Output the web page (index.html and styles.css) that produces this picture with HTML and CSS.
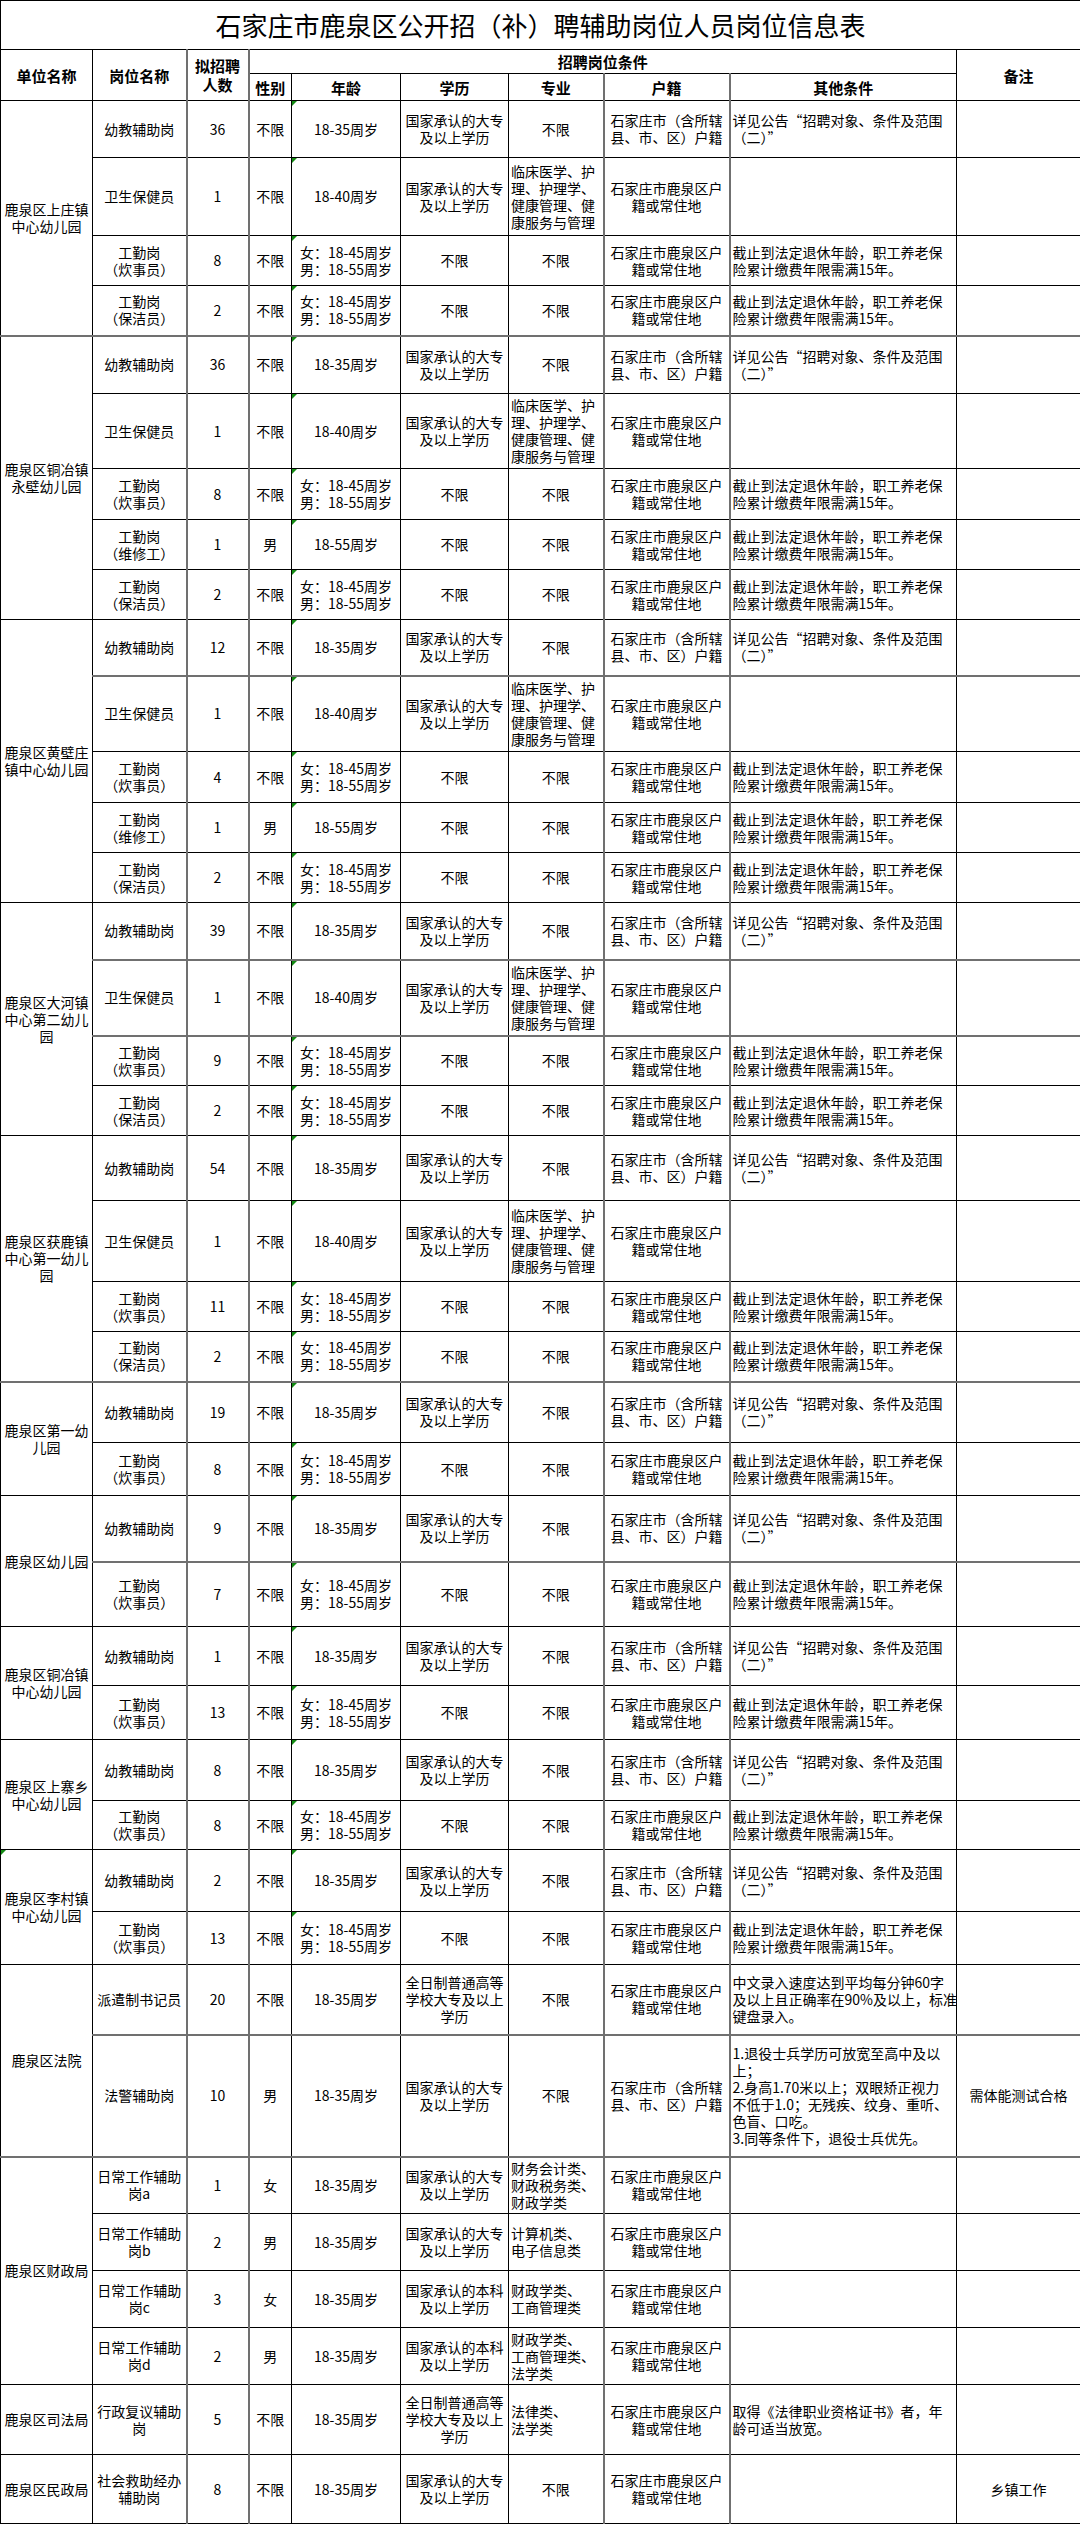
FILE: index.html
```html
<!DOCTYPE html>
<html lang="zh-CN">
<head>
<meta charset="utf-8">
<title>石家庄市鹿泉区公开招（补）聘辅助岗位人员岗位信息表</title>
<link rel="stylesheet" href="styles.css">
</head>
<body>
<table class="sheet">
<colgroup>
<col class="c1"><col class="c2"><col class="c3 gl"><col class="c4 gl"><col class="c5"><col class="c6"><col class="c7"><col class="c8 gl"><col class="c9 gl"><col class="c10">
</colgroup>
<tbody>
<tr class="title"><td colspan="10">石家庄市鹿泉区公开招（补）聘辅助岗位人员岗位信息表</td></tr>
<tr class="h24"><th rowspan="2">单位名称</th><th rowspan="2">岗位名称</th><th rowspan="2">拟招聘<br>人数</th><th colspan="6">招聘岗位条件</th><th rowspan="2">备注</th></tr>
<tr class="h27"><th>性别</th><th>年龄</th><th>学历</th><th>专业</th><th>户籍</th><th>其他条件</th></tr>

<!-- G1 -->
<tr class="h57"><td rowspan="4">鹿泉区上庄镇<br>中心幼儿园</td><td>幼教辅助岗</td><td>36</td><td>不限</td><td class="a">18-35周岁</td><td>国家承认的大专<br>及以上学历</td><td>不限</td><td>石家庄市（含所辖<br>县、市、区）户籍</td><td class="l">详见公告“招聘对象、条件及范围<br>（二）”</td><td></td></tr>
<tr class="h78"><td>卫生保健员</td><td>1</td><td>不限</td><td class="a">18-40周岁</td><td>国家承认的大专<br>及以上学历</td><td class="l">临床医学、护<br>理、护理学、<br>健康管理、健<br>康服务与管理</td><td>石家庄市鹿泉区户<br>籍或常住地</td><td></td><td></td></tr>
<tr class="h50"><td>工勤岗<br>（炊事员）</td><td>8</td><td>不限</td><td class="a">女：18-45周岁<br>男：18-55周岁</td><td>不限</td><td>不限</td><td>石家庄市鹿泉区户<br>籍或常住地</td><td class="l">截止到法定退休年龄，职工养老保<br>险累计缴费年限需满15年。</td><td></td></tr>
<tr class="h50"><td>工勤岗<br>（保洁员）</td><td>2</td><td>不限</td><td class="a">女：18-45周岁<br>男：18-55周岁</td><td>不限</td><td>不限</td><td>石家庄市鹿泉区户<br>籍或常住地</td><td class="l">截止到法定退休年龄，职工养老保<br>险累计缴费年限需满15年。</td><td></td></tr>

<!-- G2 -->
<tr class="h58 g"><td rowspan="5">鹿泉区铜冶镇<br>永壁幼儿园</td><td>幼教辅助岗</td><td>36</td><td>不限</td><td class="a">18-35周岁</td><td>国家承认的大专<br>及以上学历</td><td>不限</td><td>石家庄市（含所辖<br>县、市、区）户籍</td><td class="l">详见公告“招聘对象、条件及范围<br>（二）”</td><td></td></tr>
<tr class="h75"><td>卫生保健员</td><td>1</td><td>不限</td><td class="a">18-40周岁</td><td>国家承认的大专<br>及以上学历</td><td class="l">临床医学、护<br>理、护理学、<br>健康管理、健<br>康服务与管理</td><td>石家庄市鹿泉区户<br>籍或常住地</td><td></td><td></td></tr>
<tr class="h51"><td>工勤岗<br>（炊事员）</td><td>8</td><td>不限</td><td class="a">女：18-45周岁<br>男：18-55周岁</td><td>不限</td><td>不限</td><td>石家庄市鹿泉区户<br>籍或常住地</td><td class="l">截止到法定退休年龄，职工养老保<br>险累计缴费年限需满15年。</td><td></td></tr>
<tr class="h50"><td>工勤岗<br>（维修工）</td><td>1</td><td>男</td><td class="a">18-55周岁</td><td>不限</td><td>不限</td><td>石家庄市鹿泉区户<br>籍或常住地</td><td class="l">截止到法定退休年龄，职工养老保<br>险累计缴费年限需满15年。</td><td></td></tr>
<tr class="h50"><td>工勤岗<br>（保洁员）</td><td>2</td><td>不限</td><td class="a">女：18-45周岁<br>男：18-55周岁</td><td>不限</td><td>不限</td><td>石家庄市鹿泉区户<br>籍或常住地</td><td class="l">截止到法定退休年龄，职工养老保<br>险累计缴费年限需满15年。</td><td></td></tr>

<!-- G3 -->
<tr class="h56"><td rowspan="5">鹿泉区黄壁庄<br>镇中心幼儿园</td><td>幼教辅助岗</td><td>12</td><td>不限</td><td class="a">18-35周岁</td><td>国家承认的大专<br>及以上学历</td><td>不限</td><td>石家庄市（含所辖<br>县、市、区）户籍</td><td class="l">详见公告“招聘对象、条件及范围<br>（二）”</td><td></td></tr>
<tr class="h76 g"><td>卫生保健员</td><td>1</td><td>不限</td><td class="a">18-40周岁</td><td>国家承认的大专<br>及以上学历</td><td class="l">临床医学、护<br>理、护理学、<br>健康管理、健<br>康服务与管理</td><td>石家庄市鹿泉区户<br>籍或常住地</td><td></td><td></td></tr>
<tr class="h51"><td>工勤岗<br>（炊事员）</td><td>4</td><td>不限</td><td class="a">女：18-45周岁<br>男：18-55周岁</td><td>不限</td><td>不限</td><td>石家庄市鹿泉区户<br>籍或常住地</td><td class="l">截止到法定退休年龄，职工养老保<br>险累计缴费年限需满15年。</td><td></td></tr>
<tr class="h50"><td>工勤岗<br>（维修工）</td><td>1</td><td>男</td><td class="a">18-55周岁</td><td>不限</td><td>不限</td><td>石家庄市鹿泉区户<br>籍或常住地</td><td class="l">截止到法定退休年龄，职工养老保<br>险累计缴费年限需满15年。</td><td></td></tr>
<tr class="h50"><td>工勤岗<br>（保洁员）</td><td>2</td><td>不限</td><td class="a">女：18-45周岁<br>男：18-55周岁</td><td>不限</td><td>不限</td><td>石家庄市鹿泉区户<br>籍或常住地</td><td class="l">截止到法定退休年龄，职工养老保<br>险累计缴费年限需满15年。</td><td></td></tr>

<!-- G4 -->
<tr class="h57"><td rowspan="4">鹿泉区大河镇<br>中心第二幼儿<br>园</td><td>幼教辅助岗</td><td>39</td><td>不限</td><td class="a">18-35周岁</td><td>国家承认的大专<br>及以上学历</td><td>不限</td><td>石家庄市（含所辖<br>县、市、区）户籍</td><td class="l">详见公告“招聘对象、条件及范围<br>（二）”</td><td></td></tr>
<tr class="h76 g"><td>卫生保健员</td><td>1</td><td>不限</td><td class="a">18-40周岁</td><td>国家承认的大专<br>及以上学历</td><td class="l">临床医学、护<br>理、护理学、<br>健康管理、健<br>康服务与管理</td><td>石家庄市鹿泉区户<br>籍或常住地</td><td></td><td></td></tr>
<tr class="h50 g"><td>工勤岗<br>（炊事员）</td><td>9</td><td>不限</td><td class="a">女：18-45周岁<br>男：18-55周岁</td><td>不限</td><td>不限</td><td>石家庄市鹿泉区户<br>籍或常住地</td><td class="l">截止到法定退休年龄，职工养老保<br>险累计缴费年限需满15年。</td><td></td></tr>
<tr class="h50"><td>工勤岗<br>（保洁员）</td><td>2</td><td>不限</td><td class="a">女：18-45周岁<br>男：18-55周岁</td><td>不限</td><td>不限</td><td>石家庄市鹿泉区户<br>籍或常住地</td><td class="l">截止到法定退休年龄，职工养老保<br>险累计缴费年限需满15年。</td><td></td></tr>

<!-- G5 -->
<tr class="h65"><td rowspan="4">鹿泉区获鹿镇<br>中心第一幼儿<br>园</td><td>幼教辅助岗</td><td>54</td><td>不限</td><td class="a">18-35周岁</td><td>国家承认的大专<br>及以上学历</td><td>不限</td><td>石家庄市（含所辖<br>县、市、区）户籍</td><td class="l">详见公告“招聘对象、条件及范围<br>（二）”</td><td></td></tr>
<tr class="h81"><td>卫生保健员</td><td>1</td><td>不限</td><td class="a">18-40周岁</td><td>国家承认的大专<br>及以上学历</td><td class="l">临床医学、护<br>理、护理学、<br>健康管理、健<br>康服务与管理</td><td>石家庄市鹿泉区户<br>籍或常住地</td><td></td><td></td></tr>
<tr class="h50"><td>工勤岗<br>（炊事员）</td><td>11</td><td>不限</td><td class="a">女：18-45周岁<br>男：18-55周岁</td><td>不限</td><td>不限</td><td>石家庄市鹿泉区户<br>籍或常住地</td><td class="l">截止到法定退休年龄，职工养老保<br>险累计缴费年限需满15年。</td><td></td></tr>
<tr class="h50"><td>工勤岗<br>（保洁员）</td><td>2</td><td>不限</td><td class="a">女：18-45周岁<br>男：18-55周岁</td><td>不限</td><td>不限</td><td>石家庄市鹿泉区户<br>籍或常住地</td><td class="l">截止到法定退休年龄，职工养老保<br>险累计缴费年限需满15年。</td><td></td></tr>

<!-- G6 -->
<tr class="h61 g"><td rowspan="2">鹿泉区第一幼<br>儿园</td><td>幼教辅助岗</td><td>19</td><td>不限</td><td class="a">18-35周岁</td><td>国家承认的大专<br>及以上学历</td><td>不限</td><td>石家庄市（含所辖<br>县、市、区）户籍</td><td class="l">详见公告“招聘对象、条件及范围<br>（二）”</td><td></td></tr>
<tr class="h53"><td>工勤岗<br>（炊事员）</td><td>8</td><td>不限</td><td class="a">女：18-45周岁<br>男：18-55周岁</td><td>不限</td><td>不限</td><td>石家庄市鹿泉区户<br>籍或常住地</td><td class="l">截止到法定退休年龄，职工养老保<br>险累计缴费年限需满15年。</td><td></td></tr>

<!-- G7 -->
<tr class="h66"><td rowspan="2">鹿泉区幼儿园</td><td>幼教辅助岗</td><td>9</td><td>不限</td><td class="a">18-35周岁</td><td>国家承认的大专<br>及以上学历</td><td>不限</td><td>石家庄市（含所辖<br>县、市、区）户籍</td><td class="l">详见公告“招聘对象、条件及范围<br>（二）”</td><td></td></tr>
<tr class="h65 g"><td>工勤岗<br>（炊事员）</td><td>7</td><td>不限</td><td class="a">女：18-45周岁<br>男：18-55周岁</td><td>不限</td><td>不限</td><td>石家庄市鹿泉区户<br>籍或常住地</td><td class="l">截止到法定退休年龄，职工养老保<br>险累计缴费年限需满15年。</td><td></td></tr>

<!-- G8 -->
<tr class="h59"><td rowspan="2">鹿泉区铜冶镇<br>中心幼儿园</td><td>幼教辅助岗</td><td>1</td><td>不限</td><td class="a">18-35周岁</td><td>国家承认的大专<br>及以上学历</td><td>不限</td><td>石家庄市（含所辖<br>县、市、区）户籍</td><td class="l">详见公告“招聘对象、条件及范围<br>（二）”</td><td></td></tr>
<tr class="h54"><td>工勤岗<br>（炊事员）</td><td>13</td><td>不限</td><td class="a">女：18-45周岁<br>男：18-55周岁</td><td>不限</td><td>不限</td><td>石家庄市鹿泉区户<br>籍或常住地</td><td class="l">截止到法定退休年龄，职工养老保<br>险累计缴费年限需满15年。</td><td></td></tr>

<!-- G9 -->
<tr class="h61"><td rowspan="2">鹿泉区上寨乡<br>中心幼儿园</td><td>幼教辅助岗</td><td>8</td><td>不限</td><td class="a">18-35周岁</td><td>国家承认的大专<br>及以上学历</td><td>不限</td><td>石家庄市（含所辖<br>县、市、区）户籍</td><td class="l">详见公告“招聘对象、条件及范围<br>（二）”</td><td></td></tr>
<tr class="h49"><td>工勤岗<br>（炊事员）</td><td>8</td><td>不限</td><td class="a">女：18-45周岁<br>男：18-55周岁</td><td>不限</td><td>不限</td><td>石家庄市鹿泉区户<br>籍或常住地</td><td class="l">截止到法定退休年龄，职工养老保<br>险累计缴费年限需满15年。</td><td></td></tr>

<!-- G10 -->
<tr class="h62"><td rowspan="2" class="a">鹿泉区李村镇<br>中心幼儿园</td><td>幼教辅助岗</td><td>2</td><td>不限</td><td class="a">18-35周岁</td><td>国家承认的大专<br>及以上学历</td><td>不限</td><td>石家庄市（含所辖<br>县、市、区）户籍</td><td class="l">详见公告“招聘对象、条件及范围<br>（二）”</td><td></td></tr>
<tr class="h53"><td>工勤岗<br>（炊事员）</td><td>13</td><td>不限</td><td class="a">女：18-45周岁<br>男：18-55周岁</td><td>不限</td><td>不限</td><td>石家庄市鹿泉区户<br>籍或常住地</td><td class="l">截止到法定退休年龄，职工养老保<br>险累计缴费年限需满15年。</td><td></td></tr>

<!-- G11 -->
<tr class="h70"><td rowspan="2">鹿泉区法院</td><td>派遣制书记员</td><td>20</td><td>不限</td><td>18-35周岁</td><td>全日制普通高等<br>学校大专及以上<br>学历</td><td>不限</td><td>石家庄市鹿泉区户<br>籍或常住地</td><td class="l">中文录入速度达到平均每分钟60字<br>及以上且正确率在90%及以上，标准<br>键盘录入。</td><td></td></tr>
<tr class="h122 g"><td>法警辅助岗</td><td>10</td><td>男</td><td>18-35周岁</td><td>国家承认的大专<br>及以上学历</td><td>不限</td><td>石家庄市（含所辖<br>县、市、区）户籍</td><td class="l">1.退役士兵学历可放宽至高中及以<br>上；<br>2.身高1.70米以上；双眼矫正视力<br>不低于1.0；无残疾、纹身、重听、<br>色盲、口吃。<br>3.同等条件下，退役士兵优先。</td><td>需体能测试合格</td></tr>

<!-- G12 -->
<tr class="h57 g"><td rowspan="4">鹿泉区财政局</td><td>日常工作辅助<br>岗a</td><td>1</td><td>女</td><td>18-35周岁</td><td>国家承认的大专<br>及以上学历</td><td class="l">财务会计类、<br>财政税务类、<br>财政学类</td><td>石家庄市鹿泉区户<br>籍或常住地</td><td></td><td></td></tr>
<tr class="h57"><td>日常工作辅助<br>岗b</td><td>2</td><td>男</td><td>18-35周岁</td><td>国家承认的大专<br>及以上学历</td><td class="l">计算机类、<br>电子信息类</td><td>石家庄市鹿泉区户<br>籍或常住地</td><td></td><td></td></tr>
<tr class="h57"><td>日常工作辅助<br>岗c</td><td>3</td><td>女</td><td>18-35周岁</td><td>国家承认的本科<br>及以上学历</td><td class="l">财政学类、<br>工商管理类</td><td>石家庄市鹿泉区户<br>籍或常住地</td><td></td><td></td></tr>
<tr class="h57"><td>日常工作辅助<br>岗d</td><td>2</td><td>男</td><td>18-35周岁</td><td>国家承认的本科<br>及以上学历</td><td class="l">财政学类、<br>工商管理类、<br>法学类</td><td>石家庄市鹿泉区户<br>籍或常住地</td><td></td><td></td></tr>

<!-- G13 -->
<tr class="h70"><td>鹿泉区司法局</td><td>行政复议辅助<br>岗</td><td>5</td><td>不限</td><td>18-35周岁</td><td>全日制普通高等<br>学校大专及以上<br>学历</td><td class="l">法律类、<br>法学类</td><td>石家庄市鹿泉区户<br>籍或常住地</td><td class="l">取得《法律职业资格证书》者，年<br>龄可适当放宽。</td><td></td></tr>

<!-- G14 -->
<tr class="h69"><td>鹿泉区民政局</td><td>社会救助经办<br>辅助岗</td><td>8</td><td>不限</td><td>18-35周岁</td><td>国家承认的大专<br>及以上学历</td><td>不限</td><td>石家庄市鹿泉区户<br>籍或常住地</td><td></td><td>乡镇工作</td></tr>
</tbody>
</table>
</body>
</html>
```

FILE: styles.css
```css
html, body {
  margin: 0;
  padding: 0;
  background: #ffffff;
}

.sheet {
  border-collapse: collapse;
  table-layout: fixed;
  width: 1080px;
  font-family: "Noto Sans CJK SC", "Noto Sans", sans-serif;
  font-size: 14px;
  color: #000000;
}

.c1 { width: 92px; }
.c2 { width: 94px; }
.c3 { width: 62px; }
.c4 { width: 43px; }
.c5 { width: 109px; }
.c6 { width: 108px; }
.c7 { width: 95px; }
.c8 { width: 126px; }
.c9 { width: 227px; }
.c10 { width: 124px; }

.sheet td,
.sheet th {
  border: 1px solid #000000;
  padding: 0 2px;
  text-align: center;
  vertical-align: middle;
  white-space: nowrap;
  line-height: 17px;
  overflow: visible;
}

.sheet th {
  font-weight: 700;
  font-size: 15px;
  line-height: 19px;
}

.title td {
  height: 48px;
  font-size: 26px;
  font-weight: 400;
  line-height: 30px;
}

col.gl {
  border-left: 2px solid #707070;
}

tr.g > td {
  border-top: 2px solid #707070;
}

.sheet td.l {
  text-align: left;
}

.sheet td.a {
  position: relative;
}

.sheet td.a::before {
  content: "";
  position: absolute;
  left: 0;
  top: 0;
  border-top: 5px solid #138a13;
  border-right: 5px solid transparent;
}

.h24 { height: 24px; }
.h27 { height: 27px; }
.h49 { height: 49px; }
.h50 { height: 50px; }
.h51 { height: 51px; }
.h53 { height: 53px; }
.h54 { height: 54px; }
.h56 { height: 56px; }
.h57 { height: 57px; }
.h58 { height: 58px; }
.h59 { height: 59px; }
.h61 { height: 61px; }
.h62 { height: 62px; }
.h65 { height: 65px; }
.h66 { height: 66px; }
.h69 { height: 69px; }
.h70 { height: 70px; }
.h75 { height: 75px; }
.h76 { height: 76px; }
.h78 { height: 78px; }
.h81 { height: 81px; }
.h122 { height: 122px; }
```
